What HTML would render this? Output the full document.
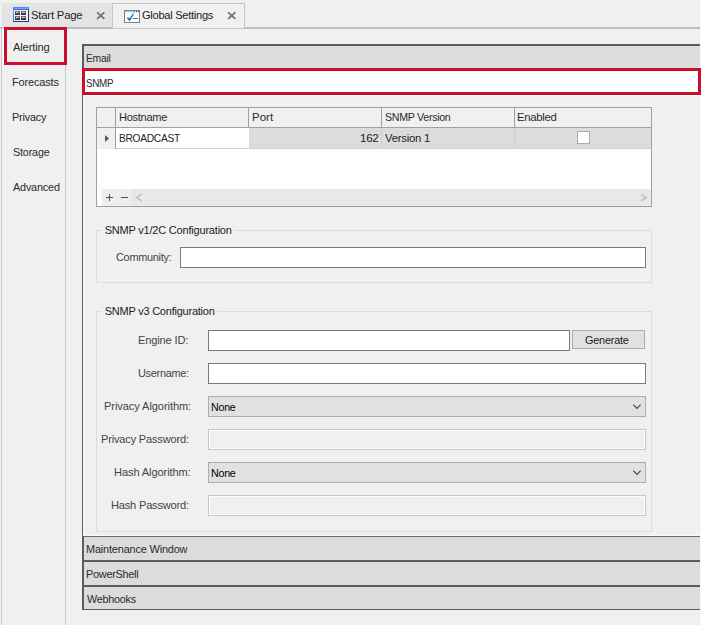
<!DOCTYPE html>
<html><head><meta charset="utf-8"><title>Global Settings</title>
<style>
html,body{margin:0;padding:0}
body{width:701px;height:625px;background:#f0f0f0;position:relative;overflow:hidden;font-family:"Liberation Sans",sans-serif;font-size:11px}
.a{position:absolute;box-sizing:border-box}
.t{position:absolute;white-space:pre;line-height:13px;height:13px;transform-origin:0 50%;font-size:11px}
.in{position:absolute;box-sizing:border-box;background:#fff;border:1px solid #7a7a7a;height:21px}
.dis{position:absolute;box-sizing:border-box;background:#f0f0f0;border:1px solid #c8c8c8;height:21px;box-shadow:inset 0 0 0 1px #fdfdfd}
.cb{position:absolute;box-sizing:border-box;background:#e1e1e1;border:1px solid #adadad;height:21px}
.gb{position:absolute;box-sizing:border-box;border:1px solid #dcdcdc}
.hd{position:absolute;background:#dcdcdc;left:84px;width:616px}
.dk{position:absolute;background:#5c5c5c}
</style></head><body>
<!-- right white strip -->
<div class="a" style="left:700px;top:0;width:1px;height:625px;background:#fafafa"></div>
<!-- tab bar -->
<div class="a" style="left:2px;top:3px;width:110px;height:24px;background:#e4e4e4"></div>
<div class="a" style="left:0;top:27px;width:700px;height:2px;background:#bdbdbd"></div>
<div class="a" style="left:112px;top:3px;width:133px;height:25px;background:#f0f0f0;border:1px solid #c4c4c4;border-bottom:none"></div>
<div class="a" style="left:113px;top:28px;width:131px;height:1px;background:#cacaca"></div>
<!-- tab icons -->
<svg class="a" style="left:13px;top:7px" width="16" height="15" viewBox="0 0 16 15">
<defs><linearGradient id="tb" x1="0" y1="0" x2="0" y2="1"><stop offset="0" stop-color="#5f8ff2"/><stop offset="1" stop-color="#2a5fda"/></linearGradient>
<linearGradient id="tl" x1="0" y1="0" x2="0" y2="1"><stop offset="0" stop-color="#4f6db0"/><stop offset="1" stop-color="#13295a"/></linearGradient>
<linearGradient id="og" x1="0" y1="0" x2="1" y2="0"><stop offset="0" stop-color="#ffd9a8"/><stop offset="1" stop-color="#ff7a22"/></linearGradient>
<linearGradient id="lb" x1="0" y1="0" x2="0" y2="1"><stop offset="0" stop-color="#9db4e4"/><stop offset="1" stop-color="#5a6f9c"/></linearGradient></defs>
<rect x="0" y="0" width="16" height="15" fill="#263a64"/>
<rect x="0" y="0" width="1" height="14" fill="url(#lb)"/>
<rect x="1" y="3" width="14" height="11" fill="#e9effc"/>
<rect x="2" y="3.5" width="12" height="10" fill="#f6f8fe"/>
<rect x="0" y="0" width="16" height="3" fill="url(#tb)"/>
<rect x="1" y="1" width="14" height="1" fill="#7ba3f3"/>
<rect x="2" y="4" width="5" height="4" fill="url(#tl)"/><rect x="8" y="4" width="5" height="4" fill="url(#tl)"/>
<rect x="2" y="9" width="5" height="4" fill="url(#tl)"/><rect x="8" y="9" width="5" height="4" fill="url(#tl)"/>
<rect x="3" y="4.8" width="3.4" height="1.3" fill="url(#og)"/><rect x="9" y="4.8" width="3.4" height="1.3" fill="url(#og)"/>
<rect x="3" y="9.8" width="3.4" height="1.3" fill="url(#og)"/><rect x="9" y="9.8" width="3.4" height="1.3" fill="url(#og)"/>
</svg>
<svg class="a" style="left:124px;top:10px" width="16" height="13" viewBox="0 0 16 13">
<defs><linearGradient id="ck" x1="0" y1="0" x2="0" y2="1"><stop offset="0" stop-color="#45c4e4"/><stop offset="0.55" stop-color="#1f8fcc"/><stop offset="1" stop-color="#0f6cb0"/></linearGradient></defs>
<rect x="0.5" y="0.5" width="15" height="12" fill="#fff" stroke="#7c808a"/>
<rect x="1" y="1" width="9" height="1" fill="#c0c6d3"/><rect x="1" y="2" width="14" height="1" fill="#e6e8ec"/>
<rect x="10" y="1" width="1" height="1" fill="#3b4f86"/><rect x="12" y="1" width="1" height="1" fill="#3b4f86"/><rect x="14" y="1" width="1" height="1" fill="#3b4f86"/>
<path d="M3.4 7.6 L5.6 9.8 L9.6 3.2" fill="none" stroke="url(#ck)" stroke-width="1.7"/>
<rect x="9" y="8" width="5" height="1" fill="#6a6a92"/>
</svg>
<!-- close X -->
<svg class="a" style="left:96px;top:11px" width="10" height="9" viewBox="0 0 10 9"><path d="M1.1 1.4 L8.4 7.9 M8.4 1.4 L1.1 7.9" stroke="#707070" stroke-width="1.7" fill="none"/></svg>
<svg class="a" style="left:227px;top:11px" width="10" height="9" viewBox="0 0 10 9"><path d="M1.1 1.4 L8.4 7.9 M8.4 1.4 L1.1 7.9" stroke="#707070" stroke-width="1.7" fill="none"/></svg>
<!-- sidebar -->
<div class="a" style="left:1px;top:29px;width:1px;height:596px;background:#c8c8c8"></div>
<div class="a" style="left:65px;top:29px;width:1px;height:596px;background:#c8c8c8"></div>
<div class="a" style="left:2px;top:28px;width:2px;height:37px;background:#fafafa"></div>
<div class="a" style="left:4px;top:27px;width:63px;height:38px;border:3px solid #c8102e;background:#f0f0f0"></div>
<!-- main panel borders -->
<div class="dk" style="left:82px;top:44px;width:2px;height:566px"></div>
<div class="a" style="left:83px;top:95px;width:617px;height:441px;border:1px solid #fbfbfb;border-right:none"></div>
<div class="dk" style="left:82px;top:44px;width:618px;height:2px"></div>
<div class="hd" style="top:46px;height:22px"></div>
<!-- SNMP red box -->
<div class="a" style="left:82px;top:68px;width:619px;height:27px;border:3px solid #c8102e;background:#fff"></div>
<!-- grid -->
<div class="a" style="left:96px;top:107px;width:556px;height:100px;border:1px solid #a0a0a0;background:#fff"></div>
<div class="a" style="left:97px;top:108px;width:554px;height:19px;background:#f0f0f0"></div>
<div class="a" style="left:97px;top:127px;width:554px;height:1px;background:#a0a0a0"></div>
<div class="a" style="left:115px;top:108px;width:1px;height:41px;background:#a0a0a0"></div>
<div class="a" style="left:248px;top:108px;width:1px;height:19px;background:#a0a0a0"></div>
<div class="a" style="left:381px;top:108px;width:1px;height:19px;background:#a0a0a0"></div>
<div class="a" style="left:514px;top:108px;width:1px;height:19px;background:#a0a0a0"></div>
<div class="a" style="left:97px;top:128px;width:18px;height:21px;background:#f0f0f0"></div>
<div class="a" style="left:249px;top:128px;width:402px;height:20px;background:#dcdcdc"></div>
<div class="a" style="left:381px;top:128px;width:1px;height:20px;background:#d0d0d0"></div>
<div class="a" style="left:514px;top:128px;width:1px;height:20px;background:#d0d0d0"></div>
<div class="a" style="left:116px;top:148px;width:535px;height:1px;background:#d0d0d0"></div>
<svg class="a" style="left:105px;top:135px" width="5" height="7" viewBox="0 0 5 7"><path d="M0 0 L4 3.5 L0 7 Z" fill="#5c5c5c"/></svg>
<div class="a" style="left:577px;top:131px;width:13px;height:13px;background:#fff;border:1px solid #ababab"></div>
<!-- grid footer -->
<div class="a" style="left:102px;top:189px;width:29px;height:17px;background:#eeeeee"></div>
<div class="a" style="left:131px;top:189px;width:520px;height:17px;background:#e8e8e8"></div>
<svg class="a" style="left:102px;top:189px" width="50" height="17" viewBox="0 0 50 17">
<path d="M4 8.5 H11 M7.5 5 V12" stroke="#505050" stroke-width="1" fill="none"/>
<path d="M19 8.5 H26" stroke="#505050" stroke-width="1" fill="none"/>
<path d="M39.8 5.2 L34.6 8.6 L39.8 12" stroke="#c4c4c4" stroke-width="1.8" fill="none"/>
</svg>
<svg class="a" style="left:638px;top:189px" width="12" height="17" viewBox="0 0 12 17"><path d="M3 5.2 L8.2 8.6 L3 12" stroke="#c4c4c4" stroke-width="1.8" fill="none"/></svg>
<!-- group v1/2C -->
<div class="gb" style="left:96px;top:230px;width:556px;height:53px"></div>
<div class="a" style="left:102px;top:228px;width:132px;height:5px;background:#f0f0f0"></div>
<div class="in" style="left:180px;top:247px;width:466px"></div>
<!-- group v3 -->
<div class="gb" style="left:96px;top:311px;width:556px;height:221px"></div>
<div class="a" style="left:102px;top:309px;width:115px;height:5px;background:#f0f0f0"></div>
<div class="in" style="left:208px;top:330px;width:362px"></div>
<div class="a" style="left:572px;top:330px;width:73px;height:19px;background:#e1e1e1;border:1px solid #adadad"></div>
<div class="in" style="left:208px;top:363px;width:438px"></div>
<div class="cb" style="left:208px;top:396px;width:438px"></div>
<div class="dis" style="left:208px;top:429px;width:438px"></div>
<div class="cb" style="left:208px;top:462px;width:438px"></div>
<div class="dis" style="left:208px;top:495px;width:438px"></div>
<svg class="a" style="left:632px;top:403px" width="10" height="7" viewBox="0 0 10 7"><path d="M1.4 1.7 L5 5.4 L8.6 1.7" stroke="#444" stroke-width="1.1" fill="none"/></svg>
<svg class="a" style="left:632px;top:469px" width="10" height="7" viewBox="0 0 10 7"><path d="M1.4 1.7 L5 5.4 L8.6 1.7" stroke="#444" stroke-width="1.1" fill="none"/></svg>
<!-- bottom headers -->
<div class="hd" style="top:537px;height:72px"></div>
<div class="dk" style="left:84px;top:536px;width:616px;height:1px;background:#6a6a6a"></div>
<div class="dk" style="left:84px;top:560px;width:616px;height:2px"></div>
<div class="dk" style="left:84px;top:585px;width:616px;height:2px"></div>
<div class="dk" style="left:82px;top:609px;width:618px;height:1px"></div>
<div class="t" style="left:30.92px;top:9px;color:#222;letter-spacing:-0.198px;transform:scaleX(1.0279);">Start Page</div>
<div class="t" style="left:142.09px;top:9px;color:#222;letter-spacing:-0.300px;transform:scaleX(1.0136);">Global Settings</div>
<div class="t" style="left:12.64px;top:41px;color:#2a2a2a;letter-spacing:-0.162px;transform:scaleX(1.0163);">Alerting</div>
<div class="t" style="left:12.01px;top:76px;color:#2a2a2a;letter-spacing:-0.166px;">Forecasts</div>
<div class="t" style="left:12.02px;top:111px;color:#2a2a2a;letter-spacing:-0.223px;transform:scaleX(0.9913);">Privacy</div>
<div class="t" style="left:12.54px;top:146px;color:#2a2a2a;letter-spacing:-0.147px;transform:scaleX(0.9760);">Storage</div>
<div class="t" style="left:12.85px;top:181px;color:#2a2a2a;letter-spacing:-0.180px;transform:scaleX(0.9841);">Advanced</div>
<div class="t" style="left:85.65px;top:52px;color:#2a2a2a;letter-spacing:-0.300px;transform:scaleX(0.9392);">Email</div>
<div class="t" style="left:85.5px;top:77px;color:#2a2a2a;letter-spacing:-0.300px;transform:scaleX(0.8913);">SNMP</div>
<div class="t" style="left:118.59px;top:111px;color:#2a2a2a;letter-spacing:-0.300px;transform:scaleX(1.0087);">Hostname</div>
<div class="t" style="left:251.65px;top:111px;color:#2a2a2a;letter-spacing:0.028px;transform:scaleX(1.0421);">Port</div>
<div class="t" style="left:384.55px;top:111px;color:#2a2a2a;letter-spacing:-0.300px;transform:scaleX(0.9670);">SNMP Version</div>
<div class="t" style="left:517.08px;top:111px;color:#2a2a2a;letter-spacing:-0.300px;transform:scaleX(1.0316);">Enabled</div>
<div class="t" style="left:118.67px;top:132px;color:#222;letter-spacing:-0.300px;transform:scaleX(0.9270);">BROADCAST</div>
<div class="t" style="left:359.65px;top:132px;color:#222;letter-spacing:-0.300px;transform:scaleX(1.0552);">162</div>
<div class="t" style="left:385.01px;top:132px;color:#222;letter-spacing:-0.208px;transform:scaleX(1.0237);">Version 1</div>
<div class="t" style="left:104.63px;top:224px;color:#222;letter-spacing:-0.199px;">SNMP v1/2C Configuration</div>
<div class="t" style="left:115.76px;top:251px;color:#444;letter-spacing:-0.279px;transform:scaleX(0.9914);">Community:</div>
<div class="t" style="left:104.63px;top:305px;color:#222;letter-spacing:-0.226px;">SNMP v3 Configuration</div>
<div class="t" style="left:137.89px;top:334px;color:#444;letter-spacing:-0.158px;transform:scaleX(1.0092);">Engine ID:</div>
<div class="t" style="left:137.53px;top:367px;color:#444;letter-spacing:-0.300px;transform:scaleX(0.9935);">Username:</div>
<div class="t" style="left:103.7px;top:400px;color:#444;letter-spacing:-0.074px;transform:scaleX(1.0044);">Privacy Algorithm:</div>
<div class="t" style="left:100.9px;top:433px;color:#444;letter-spacing:-0.176px;transform:scaleX(1.0041);">Privacy Password:</div>
<div class="t" style="left:113.69px;top:466px;color:#444;letter-spacing:-0.110px;transform:scaleX(1.0086);">Hash Algorithm:</div>
<div class="t" style="left:111.0px;top:499px;color:#444;letter-spacing:-0.221px;transform:scaleX(1.0115);">Hash Password:</div>
<div class="t" style="left:210.83px;top:401px;color:#000;letter-spacing:-0.300px;transform:scaleX(0.9767);">None</div>
<div class="t" style="left:210.83px;top:467px;color:#000;letter-spacing:-0.300px;transform:scaleX(0.9767);">None</div>
<div class="t" style="left:584.8px;top:334px;color:#222;letter-spacing:-0.197px;transform:scaleX(0.9864);">Generate</div>
<div class="t" style="left:85.91px;top:543px;color:#2a2a2a;letter-spacing:-0.176px;transform:scaleX(0.9934);">Maintenance Window</div>
<div class="t" style="left:85.92px;top:568px;color:#2a2a2a;letter-spacing:-0.300px;transform:scaleX(0.9944);">PowerShell</div>
<div class="t" style="left:86.75px;top:593px;color:#2a2a2a;letter-spacing:-0.223px;transform:scaleX(0.9775);">Webhooks</div>
</body></html>
